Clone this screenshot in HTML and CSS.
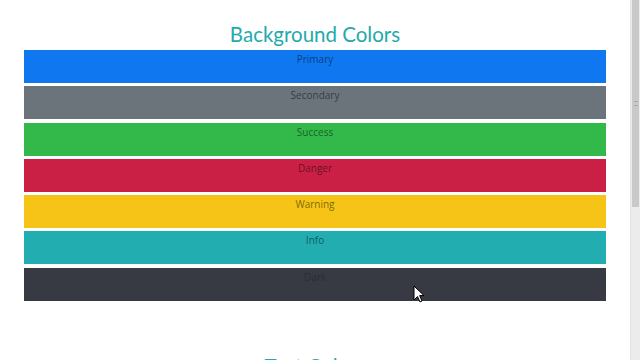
FILE: index.html
```html
<!DOCTYPE html>
<html>
<head>
	<title>Colors</title>
	<link rel="stylesheet" href="styles.css">
</head>
<body>
	<div class="window">
		<div class="page">
			<div class="container">
				<h2 class="title">Background Colors</h2>
				<div class="bar bg-primary">Primary</div>
				<div class="bar bg-secondary">Secondary</div>
				<div class="bar bg-success">Success</div>
				<div class="bar bg-danger">Danger</div>
				<div class="bar bg-warning">Warning</div>
				<div class="bar bg-info">Info</div>
				<div class="bar bg-dark">Dark</div>
				<h2 class="title title-next">Text Colors</h2>
			</div>
			<svg class="cursor" width="12" height="18" viewBox="0 0 12 18">
				<path d="M1 1 L1 15 L4.5 11.5 L7 17 L9 16 L6.6 10.6 L11 10.6 Z" fill="#fff" stroke="#000" stroke-width="1"/>
			</svg>
		</div>
		<div class="scrollbar">
			<div class="thumb"><span class="grip"></span></div>
		</div>
	</div>
</body>
</html>
```

FILE: styles.css
```css
*{
	margin: 0;
	padding: 0;
	box-sizing: border-box;
}
html,body{
	height: 100%;
	overflow: hidden;
	background: #fff;
}
body{
	font-family: "Open Sans", "Noto Sans", sans-serif;
}
.window{
	display: flex;
	height: 360px;
}
.page{
	flex: 1;
	position: relative;
	overflow: hidden;
}
.container{
	width: 582px;
	margin: 0 auto;
	padding-top: 20px;
}
.title{
	font-family: "Lato", "Open Sans", sans-serif;
	font-weight: 400;
	font-size: 20.5px;
	line-height: 28px;
	color: #25a9ac;
	text-align: center;
	margin-bottom: 2px;
}
.title-next{
	margin-top: 51px;
}
.bar{
	height: 33px;
	margin-bottom: 3.3px;
	padding-top: 3px;
	text-align: center;
	font-size: 10px;
	line-height: 13px;
	color: rgba(0,0,0,0.5);
}
.bg-primary{
	background: #0f78f0;
}
.bg-secondary{
	background: #6b737b;
}
.bg-success{
	background: #33b84a;
}
.bg-danger{
	background: #cb2045;
}
.bg-warning{
	background: #f5c416;
}
.bg-info{
	background: #22adb1;
}
.bg-dark{
	background: #373943;
	color: rgba(0,0,0,0.25);
}
.cursor{
	position: absolute;
	left: 413px;
	top: 285px;
}
.scrollbar{
	width: 10px;
	background: #ececec;
	border-left: 1px solid #e2e2e2;
	padding: 0 1px 0 1px;
}
.thumb{
	height: 207px;
	background: #c9c9c9;
	display: flex;
	align-items: center;
	justify-content: center;
}
.grip{
	width: 4px;
	height: 5px;
	border-top: 1px solid #a8a8a8;
	border-bottom: 1px solid #a8a8a8;
}
```
